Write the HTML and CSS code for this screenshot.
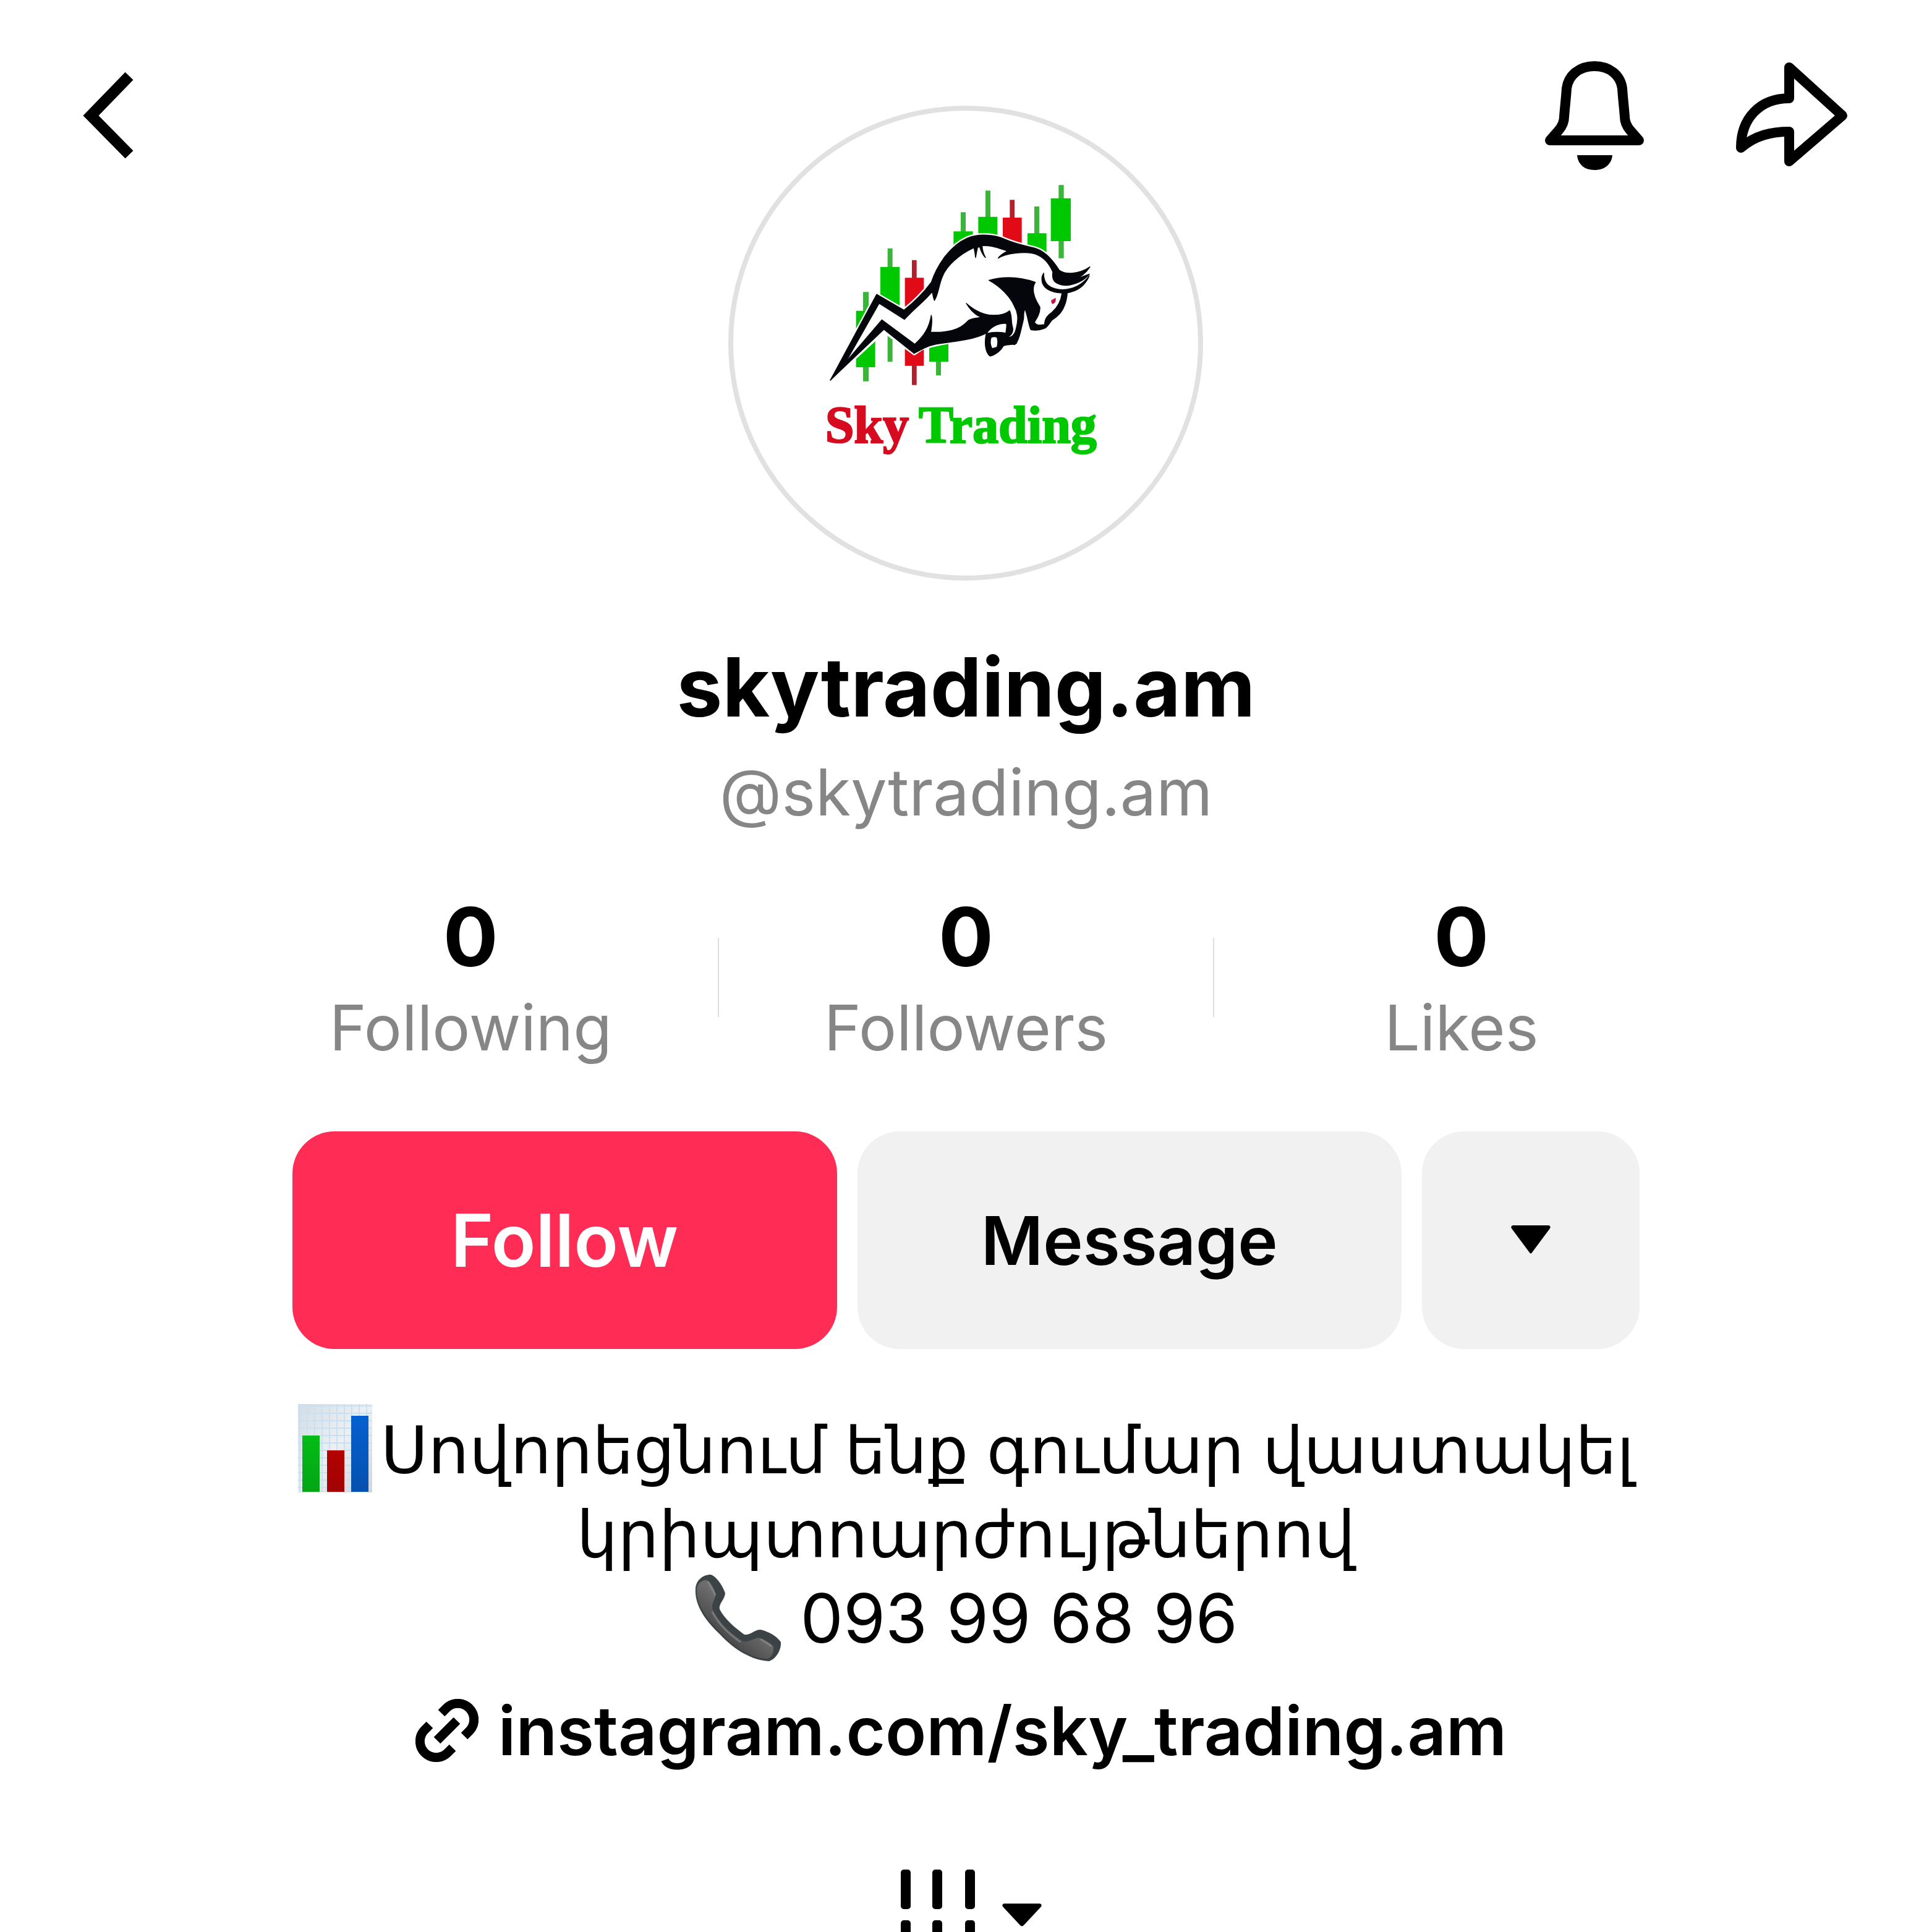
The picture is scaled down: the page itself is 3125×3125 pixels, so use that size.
FILE: index.html
```html
<!DOCTYPE html>
<html lang="en">
<head>
    <!-- Meta -->
    <meta charset="UTF-8">
    <meta name="viewport" content="width=device-width, initial-scale=1.0">
    <title>skytrading.am</title>
    <link rel="stylesheet" href="styles.css">
</head>
<body>
    <!-- Top bar with avatar -->
    <header class="top">
        <div class="top-left">
            <button type="button" class="icon-btn" aria-label="Back">
                <svg width="82" height="139" viewBox="0 0 82 139" fill="none" stroke="#000" stroke-width="18">
                    <path d="M75 6L13 70L75 133"/>
                </svg>
            </button>
        </div>

        <svg class="avatar" viewBox="-420 -327 2304 2304" role="img" aria-label="Sky Trading">
            <circle cx="732" cy="825" r="1140" fill="#fff" stroke="#e1e1e2" stroke-width="24"/>
            <!-- Candles -->
            <g fill="#3cb43c">
                <path d="M234 577h27v433h-27zM353 365h24v550h-24zM588 800h24v182h-24zM708 190h24v160h-24zM828 85h24v160h-24zM1065 162h24v160h-24zM1183 58h25v355h-25z"/>
            </g>
            <g fill="#00c800">
                <path d="M200 668h93v274h-93zM318 455h93v235h-93zM555 750h93v165h-93zM673 283h94v117h-94zM793 212h93v138h-93zM1032 292h92v108h-92zM1145 122h97v208h-97z"/>
            </g>
            <path fill="#b3202c" d="M471 422h23v606h-23zM946 130h23v160h-23z"/>
            <path fill="#e10a17" d="M437 508h92v427h-92zM912 216h92v144h-92z"/>
            <!-- Bull -->
            <path fill="#fff" stroke="#fff" stroke-width="18" stroke-linejoin="round" d="M75 1005L300 588L432 665C490 620 535 570 565 530C595 440 660 350 740 315C800 290 880 300 925 322C980 345 1030 355 1060 362C1120 375 1160 430 1185 470C1215 495 1285 490 1335 455C1335 520 1290 575 1225 585C1215 650 1190 690 1140 720L1110 760L1048 762L1020 720L975 830L850 888L830 780C780 805 620 815 520 850L482 875L335 765Z"/>
            <g fill="#05050c" stroke="#05050c" stroke-width="4" stroke-linejoin="round">
                <path d="M75 1005L300 588L432 665C490 620 535 570 565 530C595 440 660 350 740 315C800 290 880 300 925 322C980 345 1030 355 1060 362C1120 375 1160 430 1185 470C1215 495 1285 490 1335 455C1310 495 1275 512 1250 520L1332 490C1310 520 1260 545 1215 545C1165 540 1148 520 1155 480C1140 445 1110 398 1050 388C1010 382 930 388 890 413C900 395 925 385 935 378C890 365 860 350 812 352C812 375 820 395 828 410C812 395 805 375 800 358L790 360C785 380 783 395 780 410C778 390 775 375 772 362C700 395 640 450 620 500C600 545 600 590 580 618C573 600 572 585 570 575C535 620 490 650 435 710L312 632L160 900L130 950Z"/>
                <path d="M75 1005L325 712L485 830C530 790 555 750 565 690C572 720 565 750 562 772C640 775 700 765 745 715C760 705 780 703 808 700C780 690 755 665 735 632C790 680 850 700 910 685C930 680 935 675 945 668C958 690 950 720 960 750C965 775 950 790 930 800C920 780 935 750 930 730C900 725 860 740 835 775C780 805 700 815 620 825C560 830 530 850 482 875L335 758Z"/>
                <path fill-rule="evenodd" d="M832 778C870 770 900 770 935 778L930 800L980 825C960 835 930 830 915 838C900 865 870 885 850 888C826 870 822 820 832 778ZM855 798C865 792 880 792 884 798C890 812 888 830 884 845L860 852C850 832 850 812 855 798Z"/>
                <path d="M845 520C920 500 1000 505 1070 530C1050 560 1060 600 1092 650C1095 690 1070 710 1066 725C1080 745 1100 735 1115 735C1115 705 1130 690 1150 676C1180 650 1195 620 1200 580L1225 580C1220 650 1190 690 1152 712C1135 730 1130 750 1110 755C1090 762 1070 765 1048 760C1035 730 1035 700 1020 660C1008 680 1018 700 1010 720C1000 760 990 820 970 832L935 828L928 798C960 800 972 780 978 750C988 710 988 680 970 650C950 600 900 550 845 520Z"/>
                <path d="M1110 485C1110 540 1140 562 1200 566C1260 565 1300 540 1332 498C1310 550 1270 575 1220 582C1150 585 1092 560 1103 500Z"/>
            </g>
            <path fill="#c01848" d="M1146 618L1168 605C1172 620 1165 636 1150 634Z"/>
            <g class="logo-text">
                <text x="50" y="1308" fill="#d60b20" stroke="#d60b20">Sky</text>
                <text x="504" y="1308" fill="#00c800" stroke="#00c800">Trading</text>
            </g>
        </svg>

        <div class="top-right">
            <button type="button" class="icon-btn" aria-label="Notifications">
                <svg width="160" height="176" viewBox="0 0 160 176">
                    <path fill="none" stroke="#000" stroke-width="16" stroke-linejoin="round" d="M35 44C38 22 56 8 80 8S122 22 125 44C126 60 128 76 129 90C129 98 132 105 138 112L152 128H8L22 112C28 105 31 98 31 90C32 76 34 60 35 44Z"/>
                    <path d="M52 152H109C108 166 97 176 80 176S53 166 52 152Z"/>
                </svg>
            </button>
            <button type="button" class="icon-btn" aria-label="Share">
                <svg width="182" height="172" viewBox="0 0 182 172" fill="none" stroke="#000" stroke-width="16" stroke-linejoin="round">
                    <path d="M87 10L173 88L87 162V114C58 114 32 120 9 140C9 92 40 60 87 60Z"/>
                </svg>
            </button>
        </div>
    </header>

    <main>
        <!-- Name -->
        <h1>skytrading.am</h1>
        <p class="handle">@skytrading.am</p>

        <!-- Stats -->
        <div class="stats">
            <div class="stat"><strong>0</strong><span>Following</span></div>
            <div class="divider"></div>
            <div class="stat"><strong>0</strong><span>Followers</span></div>
            <div class="divider"></div>
            <div class="stat"><strong>0</strong><span>Likes</span></div>
        </div>

        <!-- Buttons -->
        <div class="actions">
            <button type="button" class="btn follow">Follow</button>
            <button type="button" class="btn message">Message</button>
            <button type="button" class="btn more" aria-label="More">
                <svg width="64" height="48" viewBox="0 0 64 48"><path d="M3 0H61Q65 1 63 5L34 44Q32 47 30 44L1 5Q-1 1 3 0Z"/></svg>
            </button>
        </div>

        <!-- Bio -->
        <p class="bio" lang="hy">
            <svg class="emoji chart" width="120" height="143" viewBox="0 0 120 143">
                <defs>
                    <pattern id="paper" width="12" height="12" patternUnits="userSpaceOnUse">
                        <path d="M0 3H12M3 0V12" stroke="#c9dff2" stroke-width="2"/>
                    </pattern>
                    <linearGradient id="sheet" x1="0" y1="0" x2="1" y2="1">
                        <stop offset="0" stop-color="#d3dde4"/>
                        <stop offset=".5" stop-color="#ecf0f3"/>
                        <stop offset="1" stop-color="#d2d4d8"/>
                    </linearGradient>
                    <linearGradient id="shade" x1="0" y1="0" x2="0" y2="1">
                        <stop offset="0" stop-color="#000" stop-opacity="0"/>
                        <stop offset="1" stop-color="#000" stop-opacity=".16"/>
                    </linearGradient>
                </defs>
                <path fill="url(#sheet)" d="M0 0H120V143H0z"/>
                <path fill="url(#paper)" d="M0 0H120V143H0z"/>
                <path fill="#04c418" d="M7 51H35V142H7z"/>
                <path fill="#c00202" d="M47 75H75V142H47z"/>
                <path fill="#0560cf" d="M86 19H114V142H86z"/>
                <path fill="url(#shade)" d="M7 51H35V142H7zM47 75H75V142H47zM86 19H114V142H86z"/>
            </svg>Սովորեցնում ենք գումար վաստակել<br>
            կրիպտոարժույթներով<br>
            <svg class="emoji" width="142" height="142" viewBox="0 0 142 142">
                <defs>
                    <linearGradient id="phone" x1="0" y1="1" x2=".5" y2=".4">
                        <stop offset="0" stop-color="#1e1e1e"/>
                        <stop offset="1" stop-color="#6c6c6c"/>
                    </linearGradient>
                </defs>
                <path fill="#3c4347" d="M2 23C3 10 14 1 26 1C34 2 46 18 50 31C49 42 39 48 41 57C50 74 66 87 81 98C92 99 97 90 107 90C121 93 134 101 140 110C141 122 133 137 121 141C94 140 64 122 42 98C20 77 0 52 2 23Z"/>
                <path fill="url(#phone)" d="M4 24C5 14 14 9 21 10C28 15 33 25 35 34C32 43 28 48 29 56C38 77 57 94 77 108C90 112 98 101 107 104C115 107 125 112 128 118C129 128 125 134 118 137C90 136 64 118 44 96C22 74 2 50 4 24Z"/>
                <path fill="none" stroke="#8f8f8f" stroke-width="3" opacity=".6" d="M22 12L34 34M29 61C40 82 57 98 75 110M107 105L125 117"/>
            </svg>
            <span class="phone">093 99 68 96</span>
        </p>

        <!-- Link -->
        <a class="link" href="https://instagram.com/sky_trading.am">
            <svg width="102" height="102" viewBox="0 0 102 102" fill="none" stroke="#000" stroke-width="15">
                <path d="M42 23L50 15A26 26 0 0 1 87 52L79 60M67 35L35 67M60 79L52 87A26 26 0 0 1 15 50L23 42"/>
            </svg>
            instagram.com/sky_trading.am
        </a>

        <!-- Tab -->
        <button type="button" class="tab" aria-label="Videos">
            <svg width="120" height="146" viewBox="0 0 120 146">
                <g id="bars">
                    <rect width="16" height="64" rx="5"/>
                    <rect x="51" width="16" height="64" rx="5"/>
                    <rect x="104" width="16" height="64" rx="5"/>
                </g>
                <use href="#bars" y="82"/>
            </svg>
            <svg width="64" height="38" viewBox="0 0 64 38"><path d="M3 1H61Q65 2 63 6L35 36Q32 39 29 36L1 6Q-1 2 3 1Z"/></svg>
        </button>
    </main>
</body>
</html>
```
FILE: styles.css
```css
* {
    margin: 0;
    padding: 0;
    box-sizing: border-box;
}

body {
    font-family: Inter, "DejaVu Sans", sans-serif;
    background-color: #fff;
    color: #000;
    height: 100vh;
    overflow: hidden;
}

button {
    font-family: inherit;
    border: none;
    background: none;
    cursor: pointer;
}

svg {
    display: block;
}

/* Top bar */
.top {
    display: grid;
    grid-template-columns: 1fr auto 1fr;
    align-items: start;
    padding: 0 136px 0 134px;
}

.top-left {
    padding-top: 117px;
}

.top-right {
    display: flex;
    justify-content: flex-end;
    align-items: flex-start;
    gap: 148px;
    padding-top: 99px;
}

.avatar {
    width: 768px;
    height: 768px;
    margin-top: 171px;
}

.logo-text {
    font-family: "Liberation Serif", serif;
    font-weight: bold;
    font-size: 252px;
    stroke-width: 7px;
}

main {
    display: flex;
    flex-direction: column;
    align-items: center;
    padding-top: 92px;
}

h1 {
    font-size: 132px;
    font-weight: 700;
    line-height: 160px;
}

.handle {
    margin-top: 26px;
    font-size: 104px;
    line-height: 128px;
    color: #868686;
}

/* Stats */
.stats {
    display: flex;
    align-items: center;
    width: 100%;
    max-width: 2402px;
    margin-top: 90px;
}

.stat {
    flex: 1;
    display: flex;
    flex-direction: column;
    align-items: center;
    gap: 3px;
}

.stat strong {
    font-size: 132px;
    font-weight: 700;
    line-height: 160px;
}

.stat span {
    font-size: 102px;
    line-height: 128px;
    color: #868686;
}

.divider {
    width: 2px;
    height: 128px;
    background-color: #dedede;
}

/* Buttons */
.actions {
    display: flex;
    gap: 33px;
    width: 100%;
    max-width: 2179px;
    margin-top: 104px;
}

.btn {
    flex: 1;
    height: 352px;
    border-radius: 68px;
    background-color: #f1f1f1;
    color: #000;
    font-weight: 600;
}

.follow {
    background-color: #ff2c55;
    color: #fff;
    font-size: 118px;
}

.message {
    font-size: 109px;
}

.more {
    flex: 0 0 352px;
    display: flex;
    align-items: center;
    justify-content: center;
}

/* Bio */
.bio {
    margin-top: 95px;
    font-size: 105px;
    line-height: 136px;
    text-align: center;
}

.emoji {
    display: inline-block;
    margin: -20px 0;
    vertical-align: -11px;
}

.chart {
    margin-right: 14px;
}

.phone {
    font-size: 110px;
}

.link {
    display: flex;
    align-items: center;
    gap: 32px;
    margin-top: 44px;
    padding-right: 16px;
    font-size: 109px;
    font-weight: 600;
    line-height: 136px;
    color: #000;
    text-decoration: none;
}

.tab {
    display: flex;
    align-items: center;
    gap: 44px;
    margin-top: 157px;
    padding-left: 16px;
}
```
